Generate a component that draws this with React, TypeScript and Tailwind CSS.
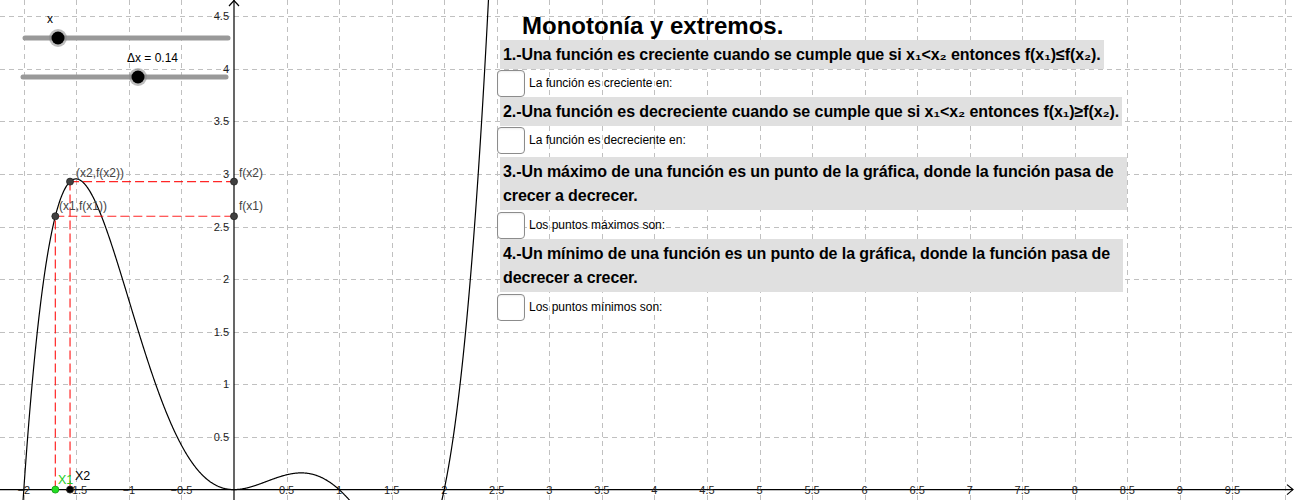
import type { ReactNode } from 'react';

// coordinate system of the graph view
const ox = 234;
const oy = 489.6;
const ux = 105.1;
const uy = 105.2;
const X = (v: number) => ox + v * ux;
const Y = (v: number) => oy - v * uy;
const f = (x: number) => 0.3 * x * x * (x - 1) * (x - 2) * (x + 2);

const x1 = -1.7;
const dx = 0.14;
const x2 = x1 + dx;

function curvePath() {
  const pts: string[] = [];
  for (let x = -2.3; x <= 2.6; x += 0.004) {
    pts.push(`${X(x).toFixed(2)},${Y(f(x)).toFixed(2)}`);
  }
  return 'M' + pts.join(' L');
}

function fmt(v: number) {
  const s = Number.isInteger(v) ? String(v) : v.toFixed(1);
  return s.replace('-', '\u2212');
}

function Graph() {
  const vLines: number[] = [];
  for (let k = -4; k <= 20; k++) if (k !== 0) vLines.push(k / 2);
  const hLines: number[] = [];
  for (let k = 1; k <= 9; k++) hLines.push(k / 2);

  const p1 = { x: X(x1), y: Y(f(x1)) };
  const p2 = { x: X(x2), y: Y(f(x2)) };

  return (
    <svg className="absolute inset-0" width={1296} height={500} viewBox="0 0 1296 500">
      {/* grid */}
      <g stroke="#c0c0c0" strokeWidth={1} strokeDasharray="5 4" shapeRendering="crispEdges">
        {vLines.map((v) => (
          <line key={'v' + v} x1={Math.round(X(v)) + 0.5} y1={0} x2={Math.round(X(v)) + 0.5} y2={500} />
        ))}
        {hLines.map((v) => (
          <line key={'h' + v} x1={0} y1={Math.round(Y(v)) + 0.5} x2={1296} y2={Math.round(Y(v)) + 0.5} />
        ))}
      </g>

      {/* axes */}
      <g stroke="#000" strokeWidth={1.2} fill="none">
        <line x1={0} y1={oy} x2={1293} y2={oy} />
        <path d={`M1287,${oy - 5} L1293,${oy} L1287,${oy + 5}`} />
        <line x1={ox} y1={0} x2={ox} y2={500} />
        <path d={`M${ox - 5},6 L${ox},0.5 L${ox + 5},6`} />
      </g>

      {/* axis labels */}
      <g fontSize={11} fill="#222">
        {vLines
          .filter((v) => v < 10)
          .map((v) => (
            <text key={'lx' + v} x={X(v)} y={oy + 4} textAnchor="middle">
              {fmt(v)}
            </text>
          ))}
        {hLines.map((v) => (
          <text key={'ly' + v} x={229} y={Y(v) + 4} textAnchor="end">
            {fmt(v)}
          </text>
        ))}
      </g>

      {/* function */}
      <path d={curvePath()} fill="none" stroke="#000" strokeWidth={1.2} />

      {/* construction lines */}
      <g stroke="#ff0000" strokeOpacity={0.85} strokeWidth={1.2} strokeDasharray="9 4" fill="none">
        <line x1={p1.x} y1={oy} x2={p1.x} y2={p1.y} />
        <line x1={p1.x} y1={p1.y} x2={ox} y2={p1.y} />
        <line x1={p2.x} y1={oy} x2={p2.x} y2={p2.y} />
        <line x1={p2.x} y1={p2.y} x2={ox} y2={p2.y} />
      </g>

      {/* points */}
      <g fill="#404040" stroke="#222" strokeWidth={0.8}>
        <circle cx={p1.x} cy={p1.y} r={3.5} />
        <circle cx={p2.x} cy={p2.y} r={3.5} />
        <circle cx={ox} cy={p1.y} r={3.5} />
        <circle cx={ox} cy={p2.y} r={3.5} />
        <circle cx={p2.x} cy={oy} r={3.5} fill="#000" />
      </g>
      <circle cx={p1.x} cy={oy} r={3.5} fill="#22dd22" stroke="#119911" strokeWidth={0.8} />

      <g fontSize={12} fill="#444">
        <text x={59} y={210}>(x1,f(x1))</text>
        <text x={76} y={177}>(x2,f(x2))</text>
        <text x={239} y={210}>f(x1)</text>
        <text x={239} y={177}>f(x2)</text>
      </g>
      <text x={58} y={484} fontSize={12.5} fill="#22cc22">X1</text>
      <text x={75} y={480} fontSize={12.5} fill="#000">X2</text>

      {/* sliders */}
      <g strokeLinecap="round">
        <line x1={25} y1={38} x2={228} y2={38} stroke="#999" strokeWidth={5} />
        <circle cx={58} cy={38} r={9} fill="#888" fillOpacity={0.55} />
        <circle cx={58} cy={38} r={6.5} fill="#000" />
        <line x1={23} y1={77} x2={226} y2={77} stroke="#999" strokeWidth={5} />
        <circle cx={138} cy={77} r={9} fill="#888" fillOpacity={0.55} />
        <circle cx={138} cy={77} r={6.5} fill="#000" />
      </g>
      <g fontSize={12} fill="#000">
        <text x={47} y={23}>x</text>
        <text x={127} y={62}>Δx = 0.14</text>
      </g>
    </svg>
  );
}

function Box({ children, className = '' }: { children: ReactNode; className?: string }) {
  return (
    <div className={`ml-[3px] bg-[#e0e0e0] px-[3px] py-[2.5px] text-[16px] font-bold leading-[24px] tracking-[-0.08px] ${className}`}>
      {children}
    </div>
  );
}

function Check({ label, className = '' }: { label: string; className?: string }) {
  return (
    <div className={`flex h-[28px] items-center gap-[4px] ${className}`}>
      <div className="h-[27px] w-[28px] rounded-[4px] border border-[#8c8c8c] bg-white shadow-[inset_0_1px_2px_rgba(0,0,0,0.08)]" />
      <span className="text-[12px] text-black">{label}</span>
    </div>
  );
}

export default function App() {
  return (
    <div className="relative h-[500px] w-[1296px] overflow-hidden bg-white font-['Liberation_Sans',Arial,sans-serif]">
      <Graph />

      <div className="absolute left-[497px] top-[11px] flex flex-col items-start text-black">
        <h1 className="ml-[25px] text-[24px] font-bold leading-[29px]">Monotonía y extremos.</h1>
        <Box>1.-Una función es creciente cuando se cumple que si x₁&lt;x₂ entonces f(x₁)≤f(x₂).</Box>
        <Check label="La función es creciente en:" />
        <Box>2.-Una función es decreciente cuando se cumple que si x₁&lt;x₂ entonces f(x₁)≥f(x₂).</Box>
        <Check label="La función es decreciente en:" />
        <Box className="mt-[3px] w-[627px]">
          3.-Un máximo de una función es un punto de la gráfica, donde la función pasa de
          <br />
          crecer a decrecer.
        </Box>
        <Check className="mt-[1px] h-[27px]" label="Los puntos máximos son:" />
        <Box className="w-[623px]">
          4.-Un mínimo de una función es un punto de la gráfica, donde la función pasa de
          <br />
          decrecer a crecer.
        </Box>
        <Check className="mt-[1px]" label="Los puntos mínimos son:" />
      </div>
    </div>
  );
}
